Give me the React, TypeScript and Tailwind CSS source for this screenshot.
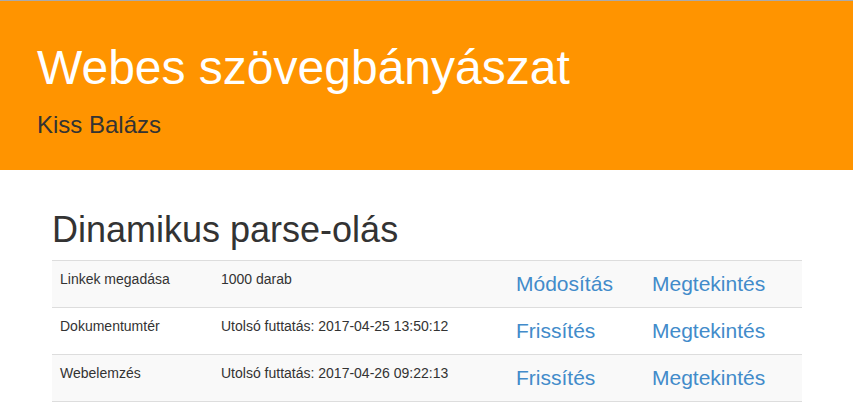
import React from "react";

const rows = [
  { name: "Linkek megadása", info: "1000 darab", action: "Módosítás" },
  { name: "Dokumentumtér", info: "Utolsó futtatás: 2017-04-25 13:50:12", action: "Frissítés" },
  { name: "Webelemzés", info: "Utolsó futtatás: 2017-04-26 09:22:13", action: "Frissítés" },
];

export default function App() {
  return (
    <div className="min-h-[406px] bg-white text-[#333] font-['Liberation_Sans',Arial,sans-serif]">
      <div className="border-t border-[#aaaaaa] bg-[#ff9400] h-[170px] px-[37px] pt-[37px]">
        <h1 className="text-white text-[48px] leading-[60px] m-0">Webes szövegbányászat</h1>
        <p className="text-[24px] leading-[30px] mt-[12px] text-[#333]">Kiss Balázs</p>
      </div>
      <div className="px-[52px] pt-[40px]">
        <h2 className="text-[36px] leading-[40px] text-[#333] mb-[10px]">Dinamikus parse-olás</h2>
        <div className="w-[750px] border-t border-[#dddddd]">
          {rows.map((r, i) => (
            <div
              key={i}
              className={`grid grid-cols-[161px_295px_136px_158px] border-b border-[#dddddd] ${i % 2 === 0 ? "bg-[#f9f9f9]" : "bg-white"}`}
            >
              <div className="p-[8px] text-[14px] leading-[20px]">{r.name}</div>
              <div className="p-[8px] text-[14px] leading-[20px]">{r.info}</div>
              <div className="p-[8px] text-[21px] leading-[30px] text-[#428bca]">{r.action}</div>
              <div className="p-[8px] text-[21px] leading-[30px] text-[#428bca]">Megtekintés</div>
            </div>
          ))}
        </div>
      </div>
    </div>
  );
}
